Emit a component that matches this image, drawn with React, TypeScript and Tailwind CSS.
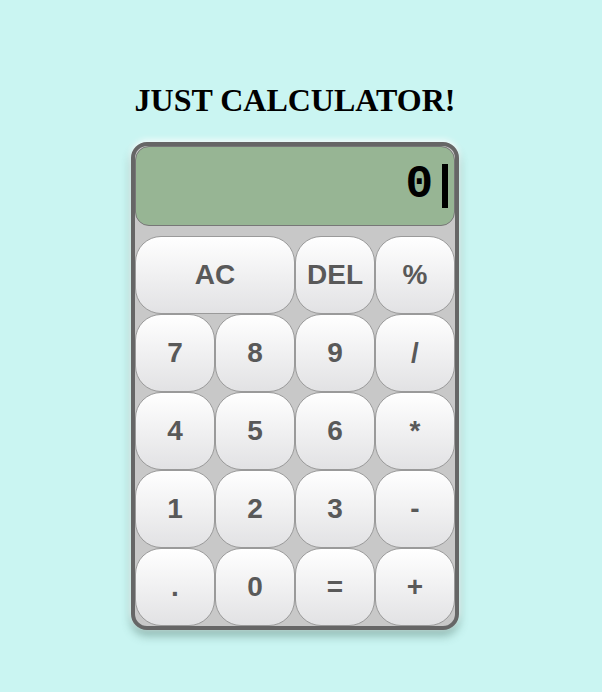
const keys: { label: string; wide?: boolean }[] = [
  { label: 'AC', wide: true },
  { label: 'DEL' },
  { label: '%' },
  { label: '7' },
  { label: '8' },
  { label: '9' },
  { label: '/' },
  { label: '4' },
  { label: '5' },
  { label: '6' },
  { label: '*' },
  { label: '1' },
  { label: '2' },
  { label: '3' },
  { label: '-' },
  { label: '.' },
  { label: '0' },
  { label: '=' },
  { label: '+' },
]

function Key({ label, wide }: { label: string; wide?: boolean }) {
  return (
    <button
      className={`${wide ? 'col-span-2' : ''} h-[78px] rounded-[26px] border border-[#9a9a9a] bg-gradient-to-b from-white to-[#e2e2e4] text-[28px] font-bold text-[#595959] font-['Liberation_Sans',Arial,sans-serif]`}
    >
      {label}
    </button>
  )
}

export default function App() {
  return (
    <div className="min-h-[692px] w-full bg-[#caf5f2] flex flex-col items-center">
      <h1 className="mt-[80px] ml-[-12px] text-[32px] leading-[40px] font-bold text-black font-['Liberation_Serif','Times_New_Roman',serif]">
        JUST CALCULATOR!
      </h1>
      <div className="mt-[22px] ml-[-12px] w-[328px] rounded-[16px] border-4 border-[#666] bg-[#c8c8c8] shadow-[0_-2px_6px_rgba(255,255,255,0.9),0_6px_10px_rgba(70,110,100,0.45)]">
        <div className="h-[80px] rounded-[14px] border border-[#777] bg-[#97b594] flex items-center justify-end pr-[6px] gap-[9px]">
          <span className="text-[46px] leading-none font-bold text-black font-['Liberation_Mono',monospace] mt-[-2px]">
            0
          </span>
          <div className="w-[6px] h-[44px] bg-black" />
        </div>
        <div className="mt-[10px] grid grid-cols-4">
          {keys.map((k) => (
            <Key key={k.label} label={k.label} wide={k.wide} />
          ))}
        </div>
      </div>
    </div>
  )
}
